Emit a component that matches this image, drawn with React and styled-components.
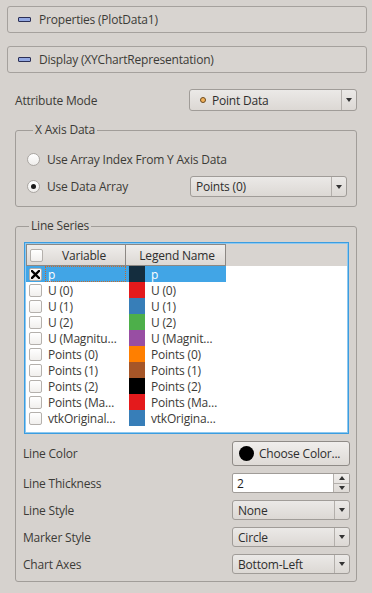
import React from 'react'
import styled, { createGlobalStyle } from 'styled-components'

const GlobalStyle = createGlobalStyle`
	html, body {
		margin: 0;
		padding: 0;
		background: #d6d2ce;
	}
	body {
		font-family: 'Open Sans', 'DejaVu Sans', sans-serif;
		font-size: 12px;
		letter-spacing: -0.2px;
		color: #3c3b37;
	}
`

const Panel = styled.div`
	width: 372px;
	height: 593px;
	box-sizing: border-box;
	padding: 6px 5px 0 7px;
	overflow: hidden;
`

const SectionHeader = styled.div`
	height: 27px;
	box-sizing: border-box;
	border: 1px solid #a5a19d;
	border-radius: 3px;
	background: #d8d4d0;
	display: flex;
	align-items: center;
	gap: 8px;
	padding-left: 10px;
	margin-bottom: 13px;
	font-size: 12px;
`

const CollapseIcon = styled.span`
	width: 13px;
	height: 5px;
	box-sizing: border-box;
	border: 1px solid #2c2f55;
	background: #93a8e2;
	border-radius: 1px;
`

const Body = styled.div`
	padding: 3px 10px 0 8px;
	display: flex;
	flex-direction: column;
`

const FormRow = styled.div`
	display: flex;
	align-items: center;
	justify-content: space-between;
	min-height: ${p => p.$h ?? 20}px;
	margin-bottom: ${p => p.$mb ?? 0}px;
`

const Label = styled.span`
	white-space: nowrap;
`

const Group = styled.fieldset`
	margin: 0 0 11px 0;
	border: 1px solid #a19d99;
	border-radius: 3px;
	padding: ${p => p.$pad};
	min-width: 0;
	display: flex;
	flex-direction: column;
	gap: ${p => p.$gap ?? 7}px;
`

const GroupTitle = styled.legend`
	padding: 0 2px;
	margin-left: 6px;
	line-height: 16px;
	font-size: 12px;
`

const ComboBox = styled.div`
	width: ${p => p.$w}px;
	height: ${p => p.$h ?? 21}px;
	box-sizing: border-box;
	border: 1px solid #a09c98;
	border-radius: 3px;
	background: linear-gradient(#ebe9e7, #dcd8d4);
	display: flex;
	align-items: stretch;
`

const ComboText = styled.div`
	flex: 1;
	display: flex;
	align-items: center;
	gap: 6px;
	padding-left: ${p => p.$pl ?? 5}px;
	color: #2e2e2e;
	white-space: nowrap;
`

const ComboArrow = styled.div`
	width: 14px;
	border-left: 1px solid #b3afab;
	display: flex;
	align-items: center;
	justify-content: center;
	&::after {
		content: '';
		border-left: 3.5px solid transparent;
		border-right: 3.5px solid transparent;
		border-top: 4px solid #333;
	}
`

const PointIcon = styled.span`
	width: 6px;
	height: 6px;
	box-sizing: border-box;
	border-radius: 50%;
	border: 1px solid #6b4a1e;
	background: #f3b25a;
`

const RadioRow = styled.label`
	display: flex;
	align-items: center;
	gap: 7px;
	min-height: 20px;
`

const Radio = styled.span`
	width: 13px;
	height: 13px;
	box-sizing: border-box;
	border-radius: 50%;
	border: 1px solid #aaa6a2;
	background: linear-gradient(#ffffff, #efedeb);
	display: flex;
	align-items: center;
	justify-content: center;
	&::after {
		content: '';
		width: 5px;
		height: 5px;
		border-radius: 50%;
		background: ${p => (p.$checked ? '#1a1a1a' : 'transparent')};
	}
`

const Table = styled.div`
	height: 192px;
	box-sizing: border-box;
	border: 1px solid #3b9de0;
	box-shadow: inset 0 0 0 1px #8ec8ef;
	background: #fff;
	margin: 0 1px 7px 1px;
	padding: 1px 0 0 1px;
	display: flex;
	flex-direction: column;
`

const HeaderRow = styled.div`
	display: flex;
	height: 22px;
	background: #d8d4d0;
	margin-right: 1px;
`

const HeaderCell = styled.div`
	width: 100px;
	box-sizing: border-box;
	border: 1px solid #8c8884;
	border-left-width: ${p => (p.$first ? 1 : 0)}px;
	background: linear-gradient(#efedeb, #dcd8d4);
	display: flex;
	align-items: center;
	padding-left: 3px;
	color: #2e2e2e;
`

const HeaderText = styled.span`
	flex: 1;
	text-align: center;
`

const SeriesRow = styled.div`
	display: flex;
	height: 16px;
	color: ${p => (p.$selected ? '#fff' : '#3c3b37')};
`

const VarCell = styled.div`
	width: 100px;
	display: flex;
	align-items: center;
	gap: 6px;
	padding-left: 3px;
	box-sizing: border-box;
	background: ${p => (p.$selected ? '#41a5e6' : 'transparent')};
	white-space: nowrap;
	overflow: hidden;
`

const FocusText = styled.span`
	flex: 1;
	align-self: stretch;
	display: flex;
	align-items: center;
	margin-left: -3px;
	padding-left: 3px;
	outline: ${p => (p.$focus ? '1px dotted #c86a2a' : 'none')};
	outline-offset: -1px;
`

const LegendCell = styled.div`
	width: 100px;
	display: flex;
	align-items: center;
	gap: 6px;
	padding-left: 3px;
	box-sizing: border-box;
	background: ${p => (p.$selected ? '#41a5e6' : 'transparent')};
	white-space: nowrap;
	overflow: hidden;
`

const Swatch = styled.span`
	width: 16px;
	height: 16px;
	flex-shrink: 0;
	background: ${p => p.$color};
`

const CheckBox = styled.span`
	width: 13px;
	height: 13px;
	flex-shrink: 0;
	box-sizing: border-box;
	border: 1px solid #b4b0ac;
	border-radius: 2px;
	background: linear-gradient(#ffffff, #f1efed);
	display: flex;
	align-items: center;
	justify-content: center;
`

const PushButton = styled.div`
	width: 118px;
	height: 25px;
	box-sizing: border-box;
	border: 1px solid #8f8b87;
	border-radius: 3px;
	background: linear-gradient(#f0eeec, #dedad6);
	display: flex;
	align-items: center;
	gap: 5px;
	padding-left: 6px;
	color: #2e2e2e;
`

const ColorDot = styled.span`
	width: 15px;
	height: 15px;
	border-radius: 50%;
	background: #000;
`

const SpinBox = styled.div`
	width: 118px;
	height: 20px;
	box-sizing: border-box;
	border: 1px solid #a09c98;
	border-radius: 2px;
	background: #fff;
	display: flex;
`

const SpinValue = styled.div`
	flex: 1;
	display: flex;
	align-items: center;
	padding-left: 4px;
	color: #1e1e1e;
`

const SpinButtons = styled.div`
	width: 15px;
	border-left: 1px solid #b3afab;
	display: flex;
	flex-direction: column;
	background: linear-gradient(#f0eeec, #dedad6);
`

const SpinArrow = styled.div`
	flex: 1;
	display: flex;
	align-items: center;
	justify-content: center;
	border-top: ${p => (p.$down ? '1px solid #b3afab' : 'none')};
	&::after {
		content: '';
		border-left: 3.5px solid transparent;
		border-right: 3.5px solid transparent;
		${p => (p.$down ? 'border-top: 4px solid #333;' : 'border-bottom: 4px solid #333;')}
	}
`

const series = [
	{ name: 'p', legend: 'p', color: '#142d3e', checked: true },
	{ name: 'U (0)', legend: 'U (0)', color: '#e41a1c' },
	{ name: 'U (1)', legend: 'U (1)', color: '#377eb8' },
	{ name: 'U (2)', legend: 'U (2)', color: '#4daf4a' },
	{ name: 'U (Magnitu…', legend: 'U (Magnit…', color: '#984ea3' },
	{ name: 'Points (0)', legend: 'Points (0)', color: '#ff7f00' },
	{ name: 'Points (1)', legend: 'Points (1)', color: '#a65628' },
	{ name: 'Points (2)', legend: 'Points (2)', color: '#000000' },
	{ name: 'Points (Ma…', legend: 'Points (Ma…', color: '#e41a1c' },
	{ name: 'vtkOriginal…', legend: 'vtkOrigina…', color: '#377eb8' },
]

const Combo = ({ w, h, children, pl }) => (
	<ComboBox $w={w} $h={h}>
		<ComboText $pl={pl}>{children}</ComboText>
		<ComboArrow />
	</ComboBox>
)

const CrossMark = () => (
	<svg width="9" height="9" viewBox="0 0 9 9">
		<path d="M1 1 L8 8 M8 1 L1 8" stroke="#000" strokeWidth="2.4" strokeLinecap="square" />
	</svg>
)

const App = () => {
	return (
		<>
			<GlobalStyle />
			<Panel>
				<SectionHeader>
					<CollapseIcon />
					Properties (PlotData1)
				</SectionHeader>
				<SectionHeader>
					<CollapseIcon />
					Display (XYChartRepresentation)
				</SectionHeader>

				<Body>
					<FormRow $h={22} $mb={11}>
						<Label>Attribute Mode</Label>
						<Combo w={168} h={22} pl={10}>
							<PointIcon />
							Point Data
						</Combo>
					</FormRow>

					<Group $pad="11px 9px 9px 11px">
						<GroupTitle>X Axis Data</GroupTitle>
						<RadioRow>
							<Radio />
							Use Array Index From Y Axis Data
						</RadioRow>
						<FormRow $h={21}>
							<RadioRow>
								<Radio $checked />
								Use Data Array
							</RadioRow>
							<Combo w={157} h={21}>
								Points (0)
							</Combo>
						</FormRow>
					</Group>

					<Group $pad="8px 6px 7px 7px" $gap={0}>
						<GroupTitle>Line Series</GroupTitle>
						<Table>
							<HeaderRow>
								<HeaderCell $first>
									<CheckBox />
									<HeaderText>Variable</HeaderText>
								</HeaderCell>
								<HeaderCell>
									<HeaderText>Legend Name</HeaderText>
								</HeaderCell>
							</HeaderRow>
							{series.map((s, i) => (
								<SeriesRow key={i} $selected={s.checked}>
									<VarCell $selected={s.checked}>
										<CheckBox>{s.checked && <CrossMark />}</CheckBox>
										<FocusText $focus={s.checked}>{s.name}</FocusText>
									</VarCell>
									<LegendCell $selected={s.checked}>
										<Swatch $color={s.color} />
										{s.legend}
									</LegendCell>
								</SeriesRow>
							))}
						</Table>

						<FormRow $h={25} $mb={7}>
							<Label>Line Color</Label>
							<PushButton>
								<ColorDot />
								Choose Color...
							</PushButton>
						</FormRow>
						<FormRow $h={20} $mb={7}>
							<Label>Line Thickness</Label>
							<SpinBox>
								<SpinValue>2</SpinValue>
								<SpinButtons>
									<SpinArrow />
									<SpinArrow $down />
								</SpinButtons>
							</SpinBox>
						</FormRow>
						<FormRow $h={20} $mb={7}>
							<Label>Line Style</Label>
							<Combo w={118} h={20}>None</Combo>
						</FormRow>
						<FormRow $h={20} $mb={7}>
							<Label>Marker Style</Label>
							<Combo w={118} h={20}>Circle</Combo>
						</FormRow>
						<FormRow $h={20}>
							<Label>Chart Axes</Label>
							<Combo w={118} h={20}>Bottom-Left</Combo>
						</FormRow>
					</Group>
				</Body>
			</Panel>
		</>
	)
}

export default App
